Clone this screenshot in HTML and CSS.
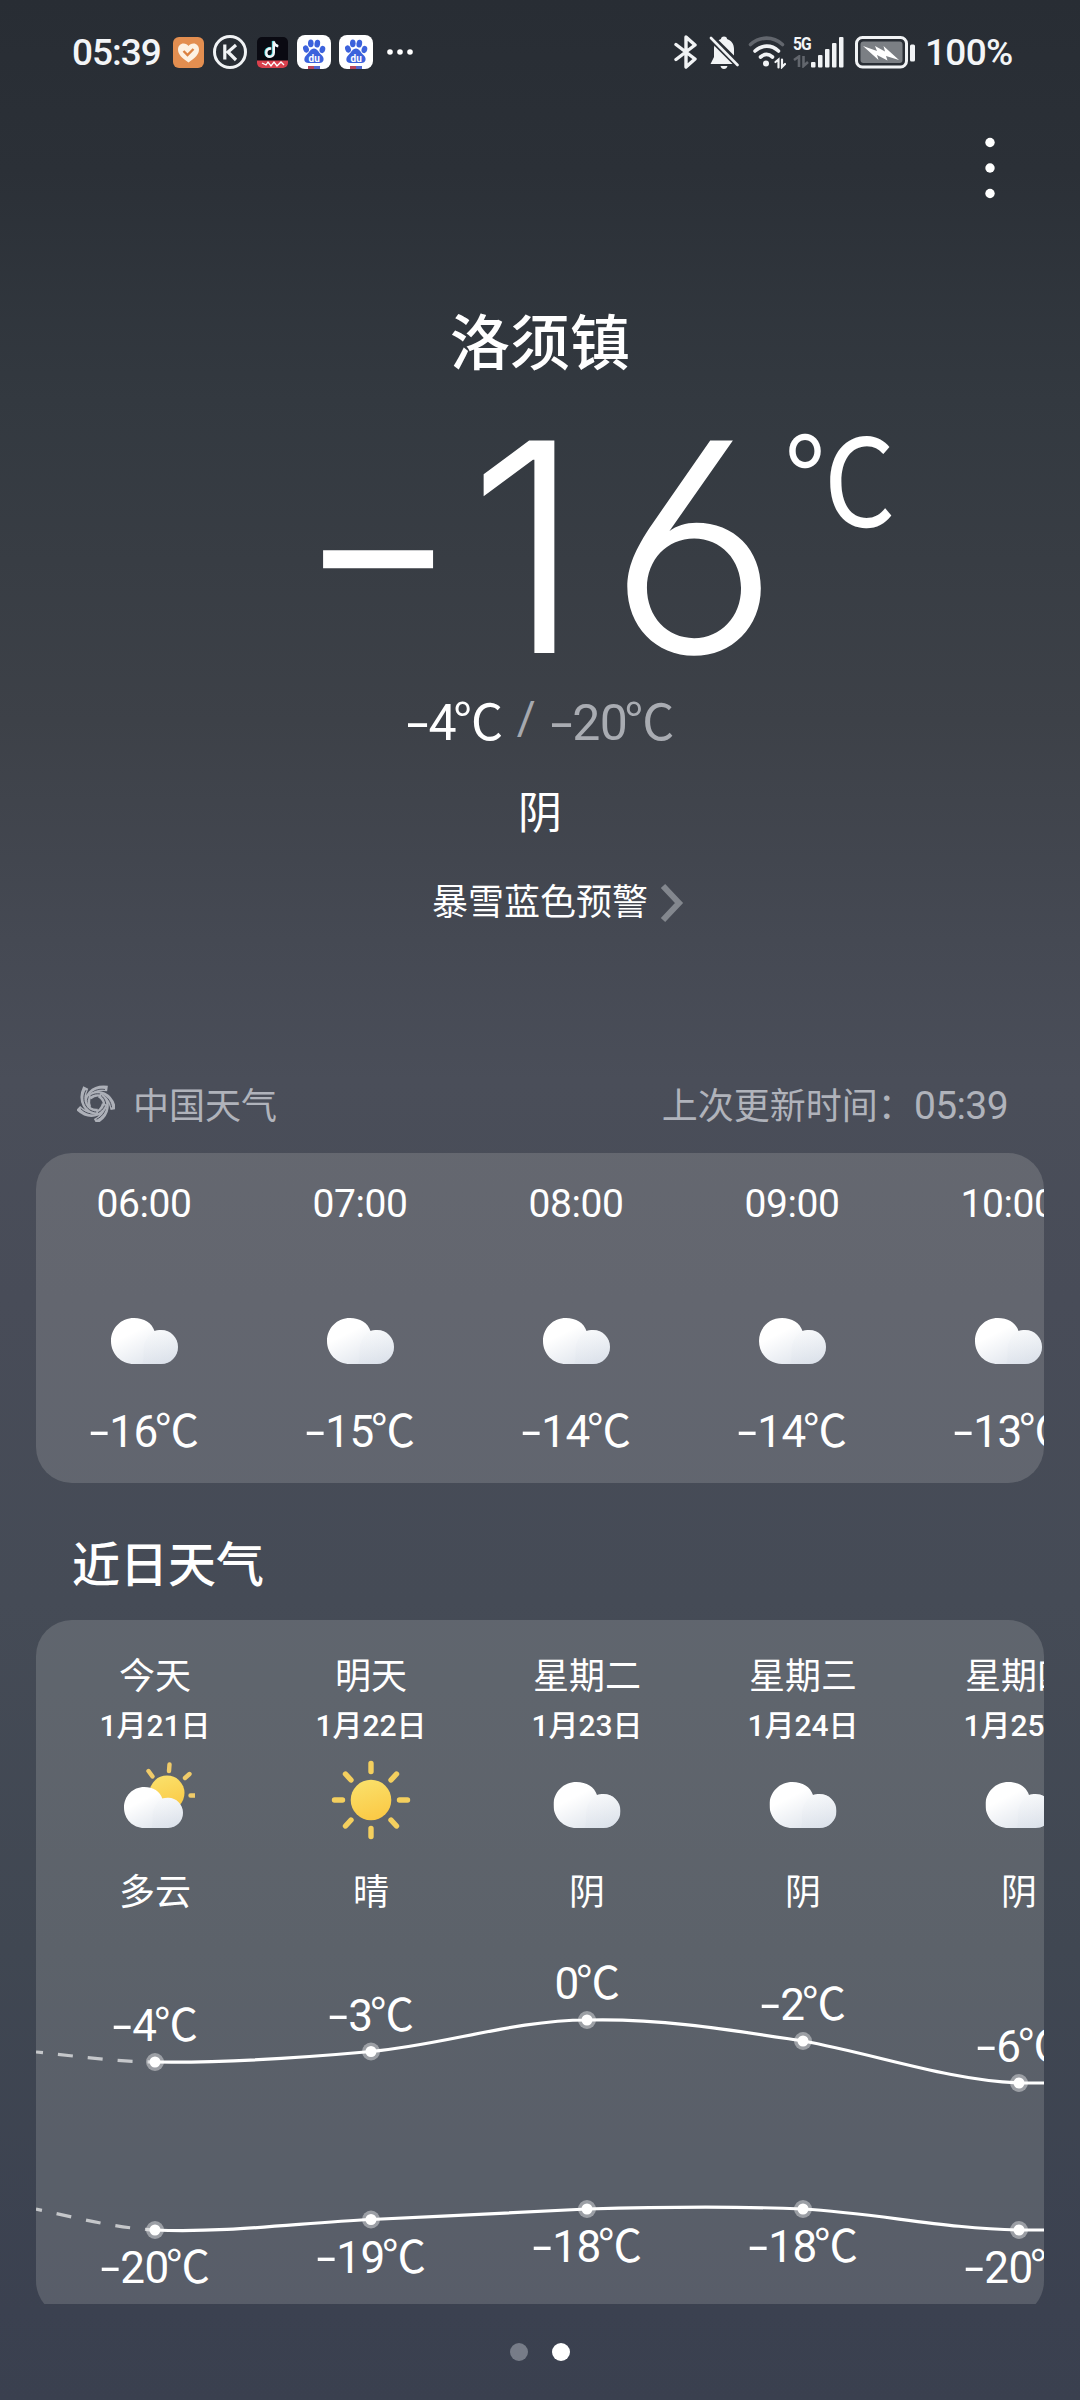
FILE: index.html
```html
<!DOCTYPE html>
<html lang="zh-CN">
<head>
<meta charset="utf-8">
<title>天气</title>
<link rel="stylesheet" href="styles.css">
</head>
<body>
<svg class="defs" width="0" height="0" aria-hidden="true">
  <defs>
    <linearGradient id="cloudFill" x1="0.15" y1="0.1" x2="0.8" y2="1">
      <stop offset="0.25" stop-color="#ffffff"/>
      <stop offset="1" stop-color="#dbe1ea"/>
    </linearGradient>
    <linearGradient id="puffFill" x1="0.6" y1="0" x2="0.4" y2="1">
      <stop offset="0" stop-color="#f8fafb"/>
      <stop offset="1" stop-color="#dbe1ea"/>
    </linearGradient>
    <linearGradient id="sunFill" x1="0.3" y1="0" x2="0.6" y2="1">
      <stop offset="0" stop-color="#fae06a"/>
      <stop offset="1" stop-color="#fbc945"/>
    </linearGradient>
    <symbol id="cloud" viewBox="0 0 67 46">
      <path fill="url(#cloudFill)" d="M23 0C33 0 41 5 43.500 13C45.500 12.300 47.500 12 50 12C59.500 12 67 19.500 67 29C67 38.500 59.500 46 50 46H23C10 46 0 36 0 23S10 0 23 0Z"/>
      <path fill="url(#puffFill)" opacity="0.3" d="M34 24C37 17 42 12 50 12C59.500 12 67 19.500 67 29C67 38.500 59.500 46 50 46H31C34 40 31 32 34 24Z"/>
    </symbol>
    <symbol id="paw" viewBox="0 0 34 34">
      <rect width="34" height="34" rx="8" fill="#fff"/>
      <g fill="#3c62dc">
        <ellipse cx="9" cy="14" rx="2.800" ry="3.700" transform="rotate(-20 9 14)"/>
        <ellipse cx="13.800" cy="8.300" rx="2.800" ry="3.900"/>
        <ellipse cx="20.300" cy="8.600" rx="2.800" ry="3.900" transform="rotate(10 20 8.600)"/>
        <ellipse cx="25.400" cy="14.500" rx="2.800" ry="3.700" transform="rotate(15 25.400 14.500)"/>
        <path d="M17 13.500C20.500 13.500 21.500 17.500 24.500 20C28 23 27 28 22.500 28H11.500C7 28 6 23.500 9.300 20.200C12.500 17.300 13.500 13.500 17 13.500Z"/>
      </g>
      <text x="17.200" y="26.500" text-anchor="middle" class="paw-text">du</text>
      <path fill="#b9445a" d="M11 31h6v3h-6z"/><path fill="#5067cf" d="M17 31h6v3h-6z"/>
    </symbol>
  </defs>
</svg>

<header class="status">
  <div class="status-left">
    <span class="clock">05:39</span>
    <svg class="app-health" width="31" height="31" viewBox="0 0 31 31">
      <rect width="31" height="31" rx="6" fill="#e38e50"/>
      <path fill="#fdf1e2" d="M15.500 25.500C9 21 5 17.500 5 12.500C5 9 7.500 6.500 10.500 6.500C12.700 6.500 14.500 7.500 15.500 9C16.500 7.500 18.300 6.500 20.500 6.500C23.500 6.500 26 9 26 12.500C26 17.500 22 21 15.500 25.500Z"/>
      <path fill="none" stroke="#dc8242" stroke-width="2.400" d="M10.500 14l4 4 6-6"/>
    </svg>
    <svg class="app-k" width="34" height="34" viewBox="0 0 34 34" fill="none" stroke="#f1f3f5">
      <circle cx="17" cy="17" r="15.500" stroke-width="3"/>
      <path stroke-width="3.200" d="M11.800 9.500v15M23 10l-8 7 8 8M14 17h3"/>
    </svg>
    <svg class="app-note" width="31" height="31" viewBox="0 0 31 31">
      <rect width="31" height="31" rx="5" fill="#0a0a12"/>
      <path d="M0 23.500h31V26a5 5 0 0 1-5 5H5a5 5 0 0 1-5-5z" fill="#d9414d"/>
      <g fill="none" stroke-width="2.400">
        <path stroke="#35d5dc" d="M13.500 11c-3.500 0-5 2-5 4.300 0 2.500 1.700 4 3.700 4s3.800-1.500 3.800-4V4c.5 3 2 4.300 4.500 4.800"/>
        <path stroke="#f4f4f6" d="M14.300 11.500c-3.500 0-5 2-5 4.300 0 2.500 1.700 4 3.700 4s3.800-1.500 3.800-4V4.500c.5 3 2 4.300 4.500 4.800"/>
      </g>
      <path d="M5 26l4 2 2-3 3 4 3-4 3 4 4-4 3 3" stroke="#fff" fill="none" stroke-width="1.300"/>
    </svg>
    <svg class="app-paw" width="34" height="34"><use href="#paw"/></svg>
    <svg class="app-paw" width="34" height="34"><use href="#paw"/></svg>
    <svg class="app-more" width="26" height="8" viewBox="0 0 26 8" fill="#fff"><circle cx="3" cy="4" r="2.800"/><circle cx="13" cy="4" r="2.800"/><circle cx="23" cy="4" r="2.800"/></svg>
  </div>
  <div class="status-right">
    <svg class="bt" width="24" height="34" viewBox="0 0 24 34" fill="none" stroke="#f1f3f5" stroke-width="3.400" stroke-linejoin="round" stroke-linecap="round"><path d="M2 9.500L21 24l-9 8V2l9 8L2 24.500"/></svg>
    <svg class="bell" width="30" height="34" viewBox="0 0 30 34">
      <path fill="#f1f3f5" d="M15 1.500c2 0 3 1 3 2.500 4.500 1.500 7 5 7 10v8l3.500 7h-27l3.500-7v-8c0-5 2.500-8.500 7-10 0-1.500 1-2.500 3-2.500zM11.500 31h7c-.5 2-1.700 3-3.500 3s-3-1-3.500-3z"/>
      <path stroke="#292e35" stroke-width="7" d="M0 .5l30 30"/><path stroke="#f1f3f5" stroke-width="2.600" stroke-linecap="round" d="M2 3l26.500 27"/>
    </svg>
    <svg class="wifi" width="38" height="34" viewBox="0 0 38 34" fill="none" stroke="#f1f3f5" stroke-width="3.600" stroke-linecap="round">
      <path stroke="#62666d" d="M2.500 9.500C12 1 25 1 34.500 9.500"/><path d="M7 16C14 9.500 23.500 9.500 30.500 16"/><path d="M12.500 22c3.800-3.200 8.200-3.200 12 0"/><circle cx="18" cy="28.500" r="3" fill="#f1f3f5" stroke="none"/>
      <path stroke-width="2.200" d="M27.500 27l3-2.500v8M34 24.500v7.500l3-3"/>
    </svg>
    <div class="cell">
      <span class="net">5G</span>
      <svg width="16" height="13" viewBox="0 0 16 13" fill="none" stroke="#62666d" stroke-width="2.600"><path d="M1 5l5-3.500V12M10.500 1v10l4.500-4"/></svg>
    </div>
    <svg class="bars" width="33" height="32" viewBox="0 0 33 32" fill="#f1f3f5"><rect x="0" y="26" width="4.500" height="5.500" rx="1"/><rect x="7" y="19" width="4.500" height="12.500" rx="1"/><rect x="14" y="13" width="4.500" height="18.500" rx="1"/><rect x="21" y="7" width="4.500" height="24.500" rx="1"/><rect x="28" y="1" width="4.500" height="30.500" rx="1"/></svg>
    <svg class="battery" width="61" height="33" viewBox="0 0 61 33"><rect x="1.500" y="1.500" width="50" height="29.500" rx="6" fill="none" stroke="#f1f3f5" stroke-width="3"/><rect x="5.500" y="5.500" width="42" height="21.500" rx="3" fill="#7b7f84"/><rect x="55" y="8.500" width="5" height="17" rx="1.500" fill="#f1f3f5"/><path fill="#fff" d="M8 10l14 5-2-5 10 5.500-1.500-5.500L44 24l-13-4 1.500 4.500L22 19l1.500 5z"/></svg>
    <span class="percent">100%</span>
  </div>
</header>

<div class="toolbar">
  <svg width="12" height="62" viewBox="0 0 12 62" fill="#fff"><circle cx="6" cy="5.500" r="4.700"/><circle cx="6" cy="31" r="4.700"/><circle cx="6" cy="56.500" r="4.700"/></svg>
</div>

<section class="now">
  <h1 class="city">洛须镇</h1>
  <div class="current"><span class="big"><span class="bigminus">-</span><span class="one">1</span><span class="six">6</span></span><span class="unit">℃</span></div>
  <div class="range"><span class="t"><i>-</i>4<b>℃</b></span><span class="slash">/</span><span class="t low"><i>-</i>20<b>℃</b></span></div>
  <div class="sky">阴</div>
  <div class="alert"><span>暴雪蓝色预警</span><svg width="24" height="40" viewBox="0 0 24 40" fill="none" stroke="#83878e" stroke-width="6"><path d="M3 3l16 17L3 37"/></svg></div>
</section>

<section class="source">
  <div class="provider">
    <svg width="38" height="38" viewBox="-19 -19 38 38" fill="none" stroke="#adb0b8">
      <g id="blade"><path stroke-width="5.600" d="M-7.500 4.500C-12-6-3-16.500 11.500-14.500"/><path stroke="#4a4e5a" stroke-width="0.900" d="M-8.500 3C-11-7-2-15.500 9-13.500"/></g>
      <use href="#blade" transform="rotate(72)"/><use href="#blade" transform="rotate(144)"/><use href="#blade" transform="rotate(216)"/><use href="#blade" transform="rotate(288)"/>
    </svg>
    <span>中国天气</span>
  </div>
  <div class="updated">上次更新时间：<span>05:39</span></div>
</section>

<section class="card hourly">
  <div class="hour"><time>06:00</time><svg class="ic"><use href="#cloud"/></svg><span class="t"><i>-</i>16<b>℃</b></span></div>
  <div class="hour"><time>07:00</time><svg class="ic"><use href="#cloud"/></svg><span class="t"><i>-</i>15<b>℃</b></span></div>
  <div class="hour"><time>08:00</time><svg class="ic"><use href="#cloud"/></svg><span class="t"><i>-</i>14<b>℃</b></span></div>
  <div class="hour"><time>09:00</time><svg class="ic"><use href="#cloud"/></svg><span class="t"><i>-</i>14<b>℃</b></span></div>
  <div class="hour"><time>10:00</time><svg class="ic"><use href="#cloud"/></svg><span class="t"><i>-</i>13<b>℃</b></span></div>
</section>

<h2 class="title">近日天气</h2>

<div class="clip">
  <section class="card daily">
    <div class="days">
      <div class="day"><span class="name">今天</span><span class="date">1月21日</span>
        <svg class="dayic" viewBox="0 0 80 80">
          <g stroke="#f0cb69" stroke-width="4.400" stroke-linecap="round"><path d="M54.500 4.500l-.5 6.500M33.500 11l4 5.500M74.500 14l-4.500 4M75.500 35.500h6"/></g>
          <circle cx="52" cy="33" r="17.500" fill="url(#sunFill)"/>
          <svg x="9" y="27" width="59" height="41" viewBox="0 0 67 46" preserveAspectRatio="none"><use href="#cloud" width="67" height="46"/></svg>
        </svg><span class="desc">多云</span></div>
      <div class="day"><span class="name">明天</span><span class="date">1月22日</span>
        <svg class="dayic" viewBox="0 0 80 80">
          <circle cx="40" cy="40" r="20.300" fill="url(#sunFill)"/>
          <g stroke="#f4cf5e" stroke-width="5.400" stroke-linecap="round"><path d="M40 3.500v8M40 68.500v8M3.500 40h8M68.500 40h8M14.500 14l5.500 6M65.500 14L60 20M14.500 66l5.500-6M65.500 66L60 60"/></g>
        </svg><span class="desc">晴</span></div>
      <div class="day"><span class="name">星期二</span><span class="date">1月23日</span><svg class="dayic" viewBox="0 0 80 80"><use href="#cloud" x="6.500" y="22" width="67" height="46"/></svg><span class="desc">阴</span></div>
      <div class="day"><span class="name">星期三</span><span class="date">1月24日</span><svg class="dayic" viewBox="0 0 80 80"><use href="#cloud" x="6.500" y="22" width="67" height="46"/></svg><span class="desc">阴</span></div>
      <div class="day"><span class="name">星期四</span><span class="date">1月25日</span><svg class="dayic" viewBox="0 0 80 80"><use href="#cloud" x="6.500" y="22" width="67" height="46"/></svg><span class="desc">阴</span></div>
    </div>
    <div class="chart">
      <svg class="lines" width="1008" height="397" viewBox="0 0 1008 397" fill="none" stroke="#fff" stroke-width="3.200">
        <path class="past" stroke-dasharray="15 15" stroke-dashoffset="8" d="M0 132C40 136 80 142 119 142"/>
        <path class="past" stroke-dasharray="15 15" stroke-dashoffset="9" d="M0 289C45 299 80 308 119 310"/>
        <path d="M119 142C191 143 263 138 335 131.500C407 125 479 100 551 100C623 98 695 110 767 121C839 134 911 160 983 163H1010"/>
        <path d="M119 310C191 313 263 303 335 299.500C407 296 479 293 551 289C623 287 695 286 767 289C839 293 911 309 983 310H1010"/>
        <g class="halo"><circle cx="119" cy="142" r="9"/><circle cx="335" cy="131.500" r="9"/><circle cx="551" cy="100" r="9"/><circle cx="767" cy="121" r="9"/><circle cx="983" cy="163" r="9"/><circle cx="119" cy="310" r="9"/><circle cx="335" cy="299.500" r="9"/><circle cx="551" cy="289" r="9"/><circle cx="767" cy="289" r="9"/><circle cx="983" cy="310" r="9"/></g>
        <g class="dot"><circle cx="119" cy="142" r="5.500"/><circle cx="335" cy="131.500" r="5.500"/><circle cx="551" cy="100" r="5.500"/><circle cx="767" cy="121" r="5.500"/><circle cx="983" cy="163" r="5.500"/><circle cx="119" cy="310" r="5.500"/><circle cx="335" cy="299.500" r="5.500"/><circle cx="551" cy="289" r="5.500"/><circle cx="767" cy="289" r="5.500"/><circle cx="983" cy="310" r="5.500"/></g>
      </svg>
      <div class="labels">
        <div class="col" style="--hi:142px;--lo:310px"><span class="t"><i>-</i>4<b>℃</b></span><span class="t"><i>-</i>20<b>℃</b></span></div>
        <div class="col" style="--hi:131.5px;--lo:299.5px"><span class="t"><i>-</i>3<b>℃</b></span><span class="t"><i>-</i>19<b>℃</b></span></div>
        <div class="col" style="--hi:100px;--lo:289px"><span class="t">0<b>℃</b></span><span class="t"><i>-</i>18<b>℃</b></span></div>
        <div class="col" style="--hi:121px;--lo:289px"><span class="t"><i>-</i>2<b>℃</b></span><span class="t"><i>-</i>18<b>℃</b></span></div>
        <div class="col" style="--hi:163px;--lo:310px"><span class="t"><i>-</i>6<b>℃</b></span><span class="t"><i>-</i>20<b>℃</b></span></div>
      </div>
    </div>
  </section>
</div>

<nav class="pager"><span></span><span class="on"></span></nav>
</body>
</html>
```
FILE: styles.css
```css
* { box-sizing: border-box; }
body {
  margin: 0;
  width: 1080px;
  height: 2400px;
  overflow: hidden;
  display: flex;
  flex-direction: column;
  color: #fff;
  font-family: Roboto, "Noto Sans CJK SC", sans-serif;
  background: linear-gradient(#282d34 0, #2b3037 170px, #333940 400px, #3d4148 720px, #454953 940px, #4a4e59 1080px, #484c58 1300px, #454b56 1600px, #404752 1950px, #3b4150 2310px, #3a404f 2400px);
}
.defs { position: absolute; }
svg { display: block; flex: none; }

.status { height: 104px; padding: 0 68px 0 72px; display: flex; justify-content: space-between; align-items: center; color: #f3f5f7; }
.status-left, .status-right { display: flex; align-items: center; }
.clock { width: 101px; font-size: 37px; font-weight: 500; letter-spacing: -1px; }
.app-k { margin-left: 9px; }
.app-note { margin-left: 10px; }
.app-paw { margin-left: 8px; }
.app-note + .app-paw { margin-left: 9px; }
.app-more { margin-left: 14px; }
.paw-text { font: 700 10px Roboto, sans-serif; fill: #fff; }
.bell { margin-left: 11px; }
.wifi { margin-left: 9px; }
.cell { width: 18px; height: 32px; margin-left: 7px; display: flex; flex-direction: column; justify-content: space-between; }
.net { font: 700 19px/15px Roboto, sans-serif; letter-spacing: -1px; transform: scaleX(.82); transform-origin: left; }
.battery { margin-left: 11px; }
.percent { margin-left: 9px; width: 87px; font-size: 37px; font-weight: 500; letter-spacing: -0.7px; white-space: nowrap; }

.toolbar { height: 128px; padding: 33px 84px 0 0; display: flex; justify-content: flex-end; }

.now { height: 824px; padding-top: 69px; display: flex; flex-direction: column; align-items: center; }
.city { margin: 0; font-size: 60px; line-height: 88px; font-weight: 500; }
.current { width: 660px; height: 300px; margin-left: 180px; display: flex; align-items: flex-start; }
.big { display: flex; font: 300 292px/300px Inter, sans-serif; font-feature-settings: "cv03", "cv04"; margin-top: 8px; }
.bigminus, .one, .six { display: block; text-align: center; }
.bigminus { width: 156px; transform: translateY(-3px) scaleX(1.24); }
.one { width: 137px; padding-left: 1px; }
.six { width: 202px; transform: scaleX(1.02); }
.unit { font: 400 112px/120px "Noto Sans CJK SC", sans-serif; margin: 24px 0 0 -11px; transform: scaleY(1.08); }

.t { display: inline-flex; align-items: baseline; justify-content: center; font-size: 44px; line-height: 52px; height: 52px; letter-spacing: -0.01em; white-space: nowrap; }
.t i { font-style: normal; width: .45em; text-align: center; transform: scaleX(1.6); }
.t b { font-family: "Noto Sans CJK SC", sans-serif; font-weight: 400; line-height: 52px; margin-left: -.06em; }
.range { display: flex; align-items: center; margin-top: -3px; height: 75px; padding-bottom: 12px; }
.range .t { font-size: 50px; }
.slash { font-size: 46px; line-height: 52px; color: #a6a9af; margin: 0 14px; }
.low { color: #a9acb2; }
.sky { margin-top: 21px; font-size: 44px; line-height: 64px; }
.alert { margin-top: 31px; margin-left: 36px; display: flex; align-items: center; gap: 12px; font-size: 36px; line-height: 52px; }

.source { height: 97px; padding: 0 72px 4px 77px; display: flex; justify-content: space-between; align-items: center; font-size: 36px; color: #b0b3bb; }
.provider { display: flex; align-items: center; gap: 18px; }
.updated span { font-size: 39px; letter-spacing: -0.6px; }

.card { background: rgba(255, 255, 248, .15); border-radius: 36px; overflow: hidden; }
.hourly { height: 330px; margin: 0 36px; display: flex; }
.hour { flex: none; width: 216px; display: flex; flex-direction: column; align-items: center; }
.hour time { margin-top: 26px; font-size: 39px; line-height: 50px; letter-spacing: -0.4px; }
.ic { width: 67px; height: 46px; margin: 89px 0 38px; }

.title { margin: 0; height: 137px; padding-left: 72px; font-size: 48px; line-height: 166px; font-weight: 500; }

.clip { height: 684px; margin: 0 36px; overflow: hidden; }
.daily { height: 697px; }
.days { display: flex; padding-left: 11px; height: 300px; }
.day { flex: none; width: 216px; display: flex; flex-direction: column; align-items: center; }
.name { margin-top: 31px; font-size: 36px; line-height: 52px; }
.date { font-size: 30px; line-height: 44px; font-weight: 500; margin-top: 1px; }
.dayic { width: 80px; height: 80px; margin-top: 12px; }
.desc { margin-top: 27px; font-size: 36px; line-height: 52px; }
.chart { position: relative; height: 397px; }
.lines { position: absolute; left: 0; top: 0; }
.past { opacity: .65; }
.halo { fill: #fff; fill-opacity: .4; stroke: none; }
.dot { fill: #fff; stroke: none; }
.labels { display: flex; padding-left: 11px; }
.col { flex: none; width: 216px; display: flex; flex-direction: column; align-items: center; padding-top: calc(var(--hi) - 66px); }
.col .t + .t { margin-top: calc(var(--lo) - var(--hi) + 22px); }

.pager { flex: 1; display: flex; justify-content: center; align-items: center; gap: 24px; }
.pager span { width: 18px; height: 18px; border-radius: 50%; background: #777c88; }
.pager .on { background: #fff; }
```
